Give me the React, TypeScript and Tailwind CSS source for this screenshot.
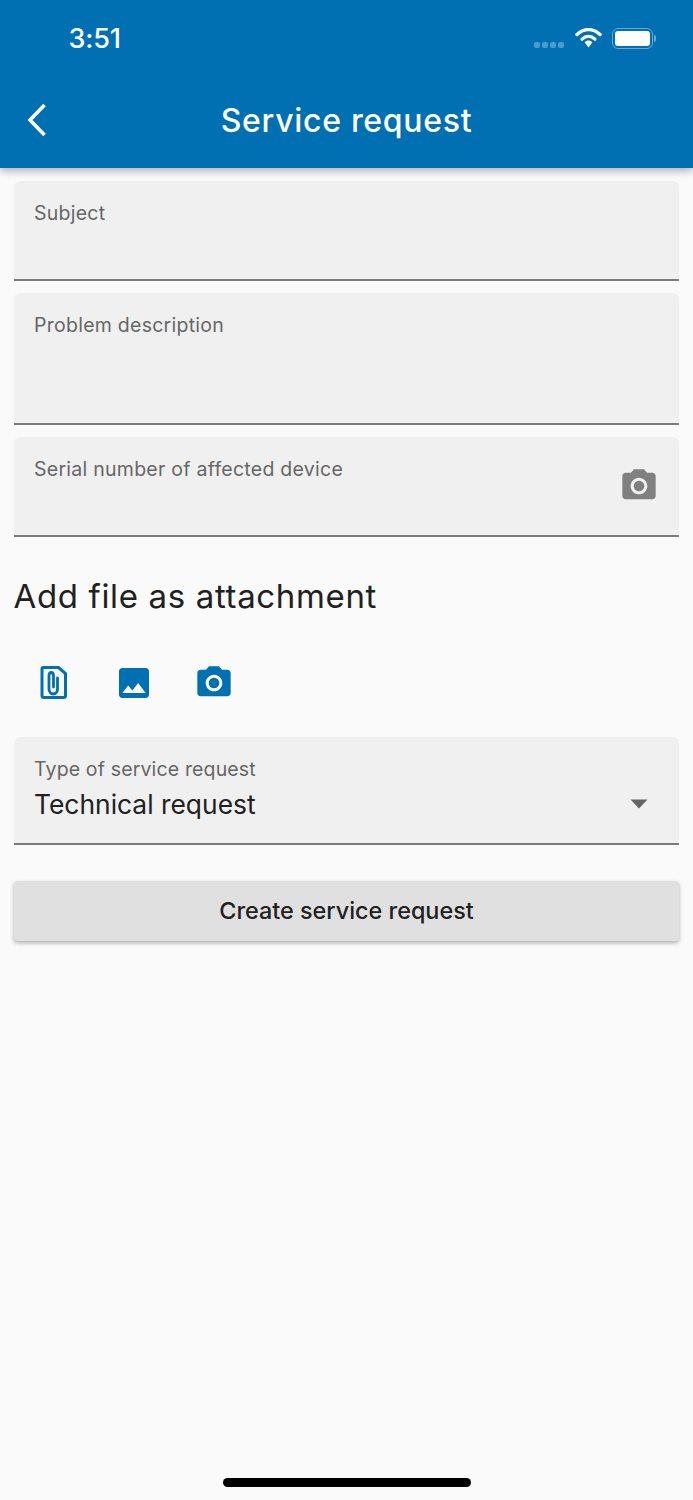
const CAMERA = "M9 2L7.17 4H4c-1.1 0-2 .9-2 2v12c0 1.1.9 2 2 2h16c1.1 0 2-.9 2-2V6c0-1.1-.9-2-2-2h-3.17L15 2H9zm3 15c-2.76 0-5-2.24-5-5s2.24-5 5-5 5 2.24 5 5-2.24 5-5 5z";

function Camera({ color }: { color: string }) {
  return (
    <svg width="40" height="40" viewBox="0 0 24 24" fill={color}>
      <circle cx="12" cy="12" r="3.2" />
      <path d={CAMERA} />
    </svg>
  );
}

function Field({ label, h, icon }: { label: string; h: string; icon?: boolean }) {
  return (
    <div className={`relative mx-[14px] rounded-t-[6px] bg-[#f0f0f0] border-b-2 border-[#7a7a7a] ${h}`}>
      <div className="pl-[20px] pt-[19px] text-[19.5px] leading-[26px] tracking-[0.26px] text-[#666666]">{label}</div>
      {icon && (
        <div className="absolute right-[20px] top-[29px]">
          <Camera color="#808080" />
        </div>
      )}
    </div>
  );
}

export default function App() {
  return (
    <div className="relative h-[1500px] w-[693px] overflow-hidden bg-[#fafafa] font-['Inter',sans-serif]">
      <header className="relative z-10 h-[168px] bg-[#0070b2] shadow-[0_3px_8px_rgba(0,0,0,0.3)] text-white">
        <div className="flex h-[76px] items-center justify-between pl-[68.5px] pr-[37px]">
          <span className="text-[27px] font-medium leading-none tracking-[-0.2px]">3:51</span>
          <div className="flex items-center">
            <div className="mr-[11px] mt-[13px] flex gap-[2px]">
              {[0, 1, 2, 3].map((i) => (
                <span key={i} className="h-[6px] w-[6px] rounded-[2px] bg-white/30" />
              ))}
            </div>
            <svg width="27" height="21" viewBox="0 0 27 21" fill="none" className="mr-[10px] -mt-[1px]">
              <path d="M2 7.5C9 1 18 1 25 7.5" stroke="white" strokeWidth="3.4" strokeLinecap="round" />
              <path d="M7 12.2C11 8.5 16 8.5 20 12.2" stroke="white" strokeWidth="3.2" strokeLinecap="round" />
              <path d="M9.6 15.2C12 13 15 13 17.4 15.2L13.5 20.5Z" fill="white" />
            </svg>
            <div className="flex items-center">
              <div className="flex h-[21px] w-[41px] items-center justify-center rounded-[6px] border-[1.5px] border-white/40">
                <div className="h-[15px] w-[35px] rounded-[3px] bg-white" />
              </div>
              <div className="ml-[1px] h-[7px] w-[2px] rounded-r-[2px] bg-white/40" />
            </div>
          </div>
        </div>
        <div className="relative flex h-[90px] items-center justify-center">
          <svg width="28" height="38" viewBox="0 0 28 38" fill="none" className="absolute left-[24px] top-[25px]">
            <path d="M20.5 4L6 19L20.5 34" stroke="white" strokeWidth="3.6" />
          </svg>
          <span className="-mt-[1px] text-[32px] font-medium leading-none tracking-[0.7px]">Service request</span>
        </div>
      </header>

      <main className="flex flex-col pt-[13px]">
        <div className="flex flex-col gap-[12px]">
          <Field label="Subject" h="h-[100px]" />
          <Field label="Problem description" h="h-[132px]" />
          <Field label="Serial number of affected device" h="h-[100px]" icon />
        </div>

        <h2 className="ml-[13.5px] mt-[39px] text-[33px] font-normal leading-[40px] tracking-[0.65px] text-[#212121]">Add file as attachment</h2>

        <div className="ml-[14px] mt-[47px] flex h-[40px] items-center gap-[40px] pl-[20px]">
          <svg width="40" height="40" viewBox="0 0 40 40" fill="none">
            <path d="M9.500 5.500H24.500L31.500 11.500V33.500C31.500 34.700 30.700 35.500 29.500 35.500H10C8.800 35.500 8 34.700 8 33.500V7C8 6 8.500 5.500 9.500 5.500Z" stroke="#0070b2" strokeWidth="3" transform="translate(0 -1)" />
            <path d="M23.500 16V27C23.500 30 21.500 32 19.200 32C17 32 15 30 15 27V14C15 11.800 16 10.500 17.300 10.500C18.600 10.500 19.500 11.800 19.500 14V25" stroke="#0070b2" strokeWidth="2.800" strokeLinecap="round" transform="translate(0 -1)" />
          </svg>
          <svg width="40" height="40" viewBox="0 0 24 24" fill="#0070b2">
            <path d="M21 19V5c0-1.100-.9-2-2-2H5c-1.100 0-2 .9-2 2v14c0 1.100.9 2 2 2h14c1.100 0 2-.9 2-2zM8.500 13.500l2.500 3.010L14.500 12l4.500 6H5l3.500-4.500z" />
          </svg>
          <Camera color="#0070b2" />
        </div>

        <div className="relative mx-[14px] mt-[34px] h-[108px] rounded-t-[6px] border-b-2 border-[#7a7a7a] bg-[#f0f0f0] pl-[20px] pt-[20px]">
          <div className="text-[19.500px] leading-[25px] tracking-[0.15px] text-[#666666]">Type of service request</div>
          <div className="mt-[6px] text-[26.400px] leading-[32px] tracking-[0px] text-[#212121]">Technical request</div>
          <svg width="18" height="10" viewBox="0 0 18 10" className="absolute right-[31px] top-[62px]">
            <path d="M0.500 0.500H17.500L9 9.500Z" fill="#666666" />
          </svg>
        </div>

        <button className="mx-[14px] mt-[36px] h-[60px] rounded-[4px] bg-[#e0e0e0] text-[23.400px] font-medium tracking-[0px] text-[#212121] shadow-[0_2px_4px_rgba(0,0,0,0.3)]">
          Create service request
        </button>
      </main>

      <div className="absolute bottom-[13px] left-[223px] h-[9px] w-[248px] rounded-full bg-black" />
    </div>
  );
}
